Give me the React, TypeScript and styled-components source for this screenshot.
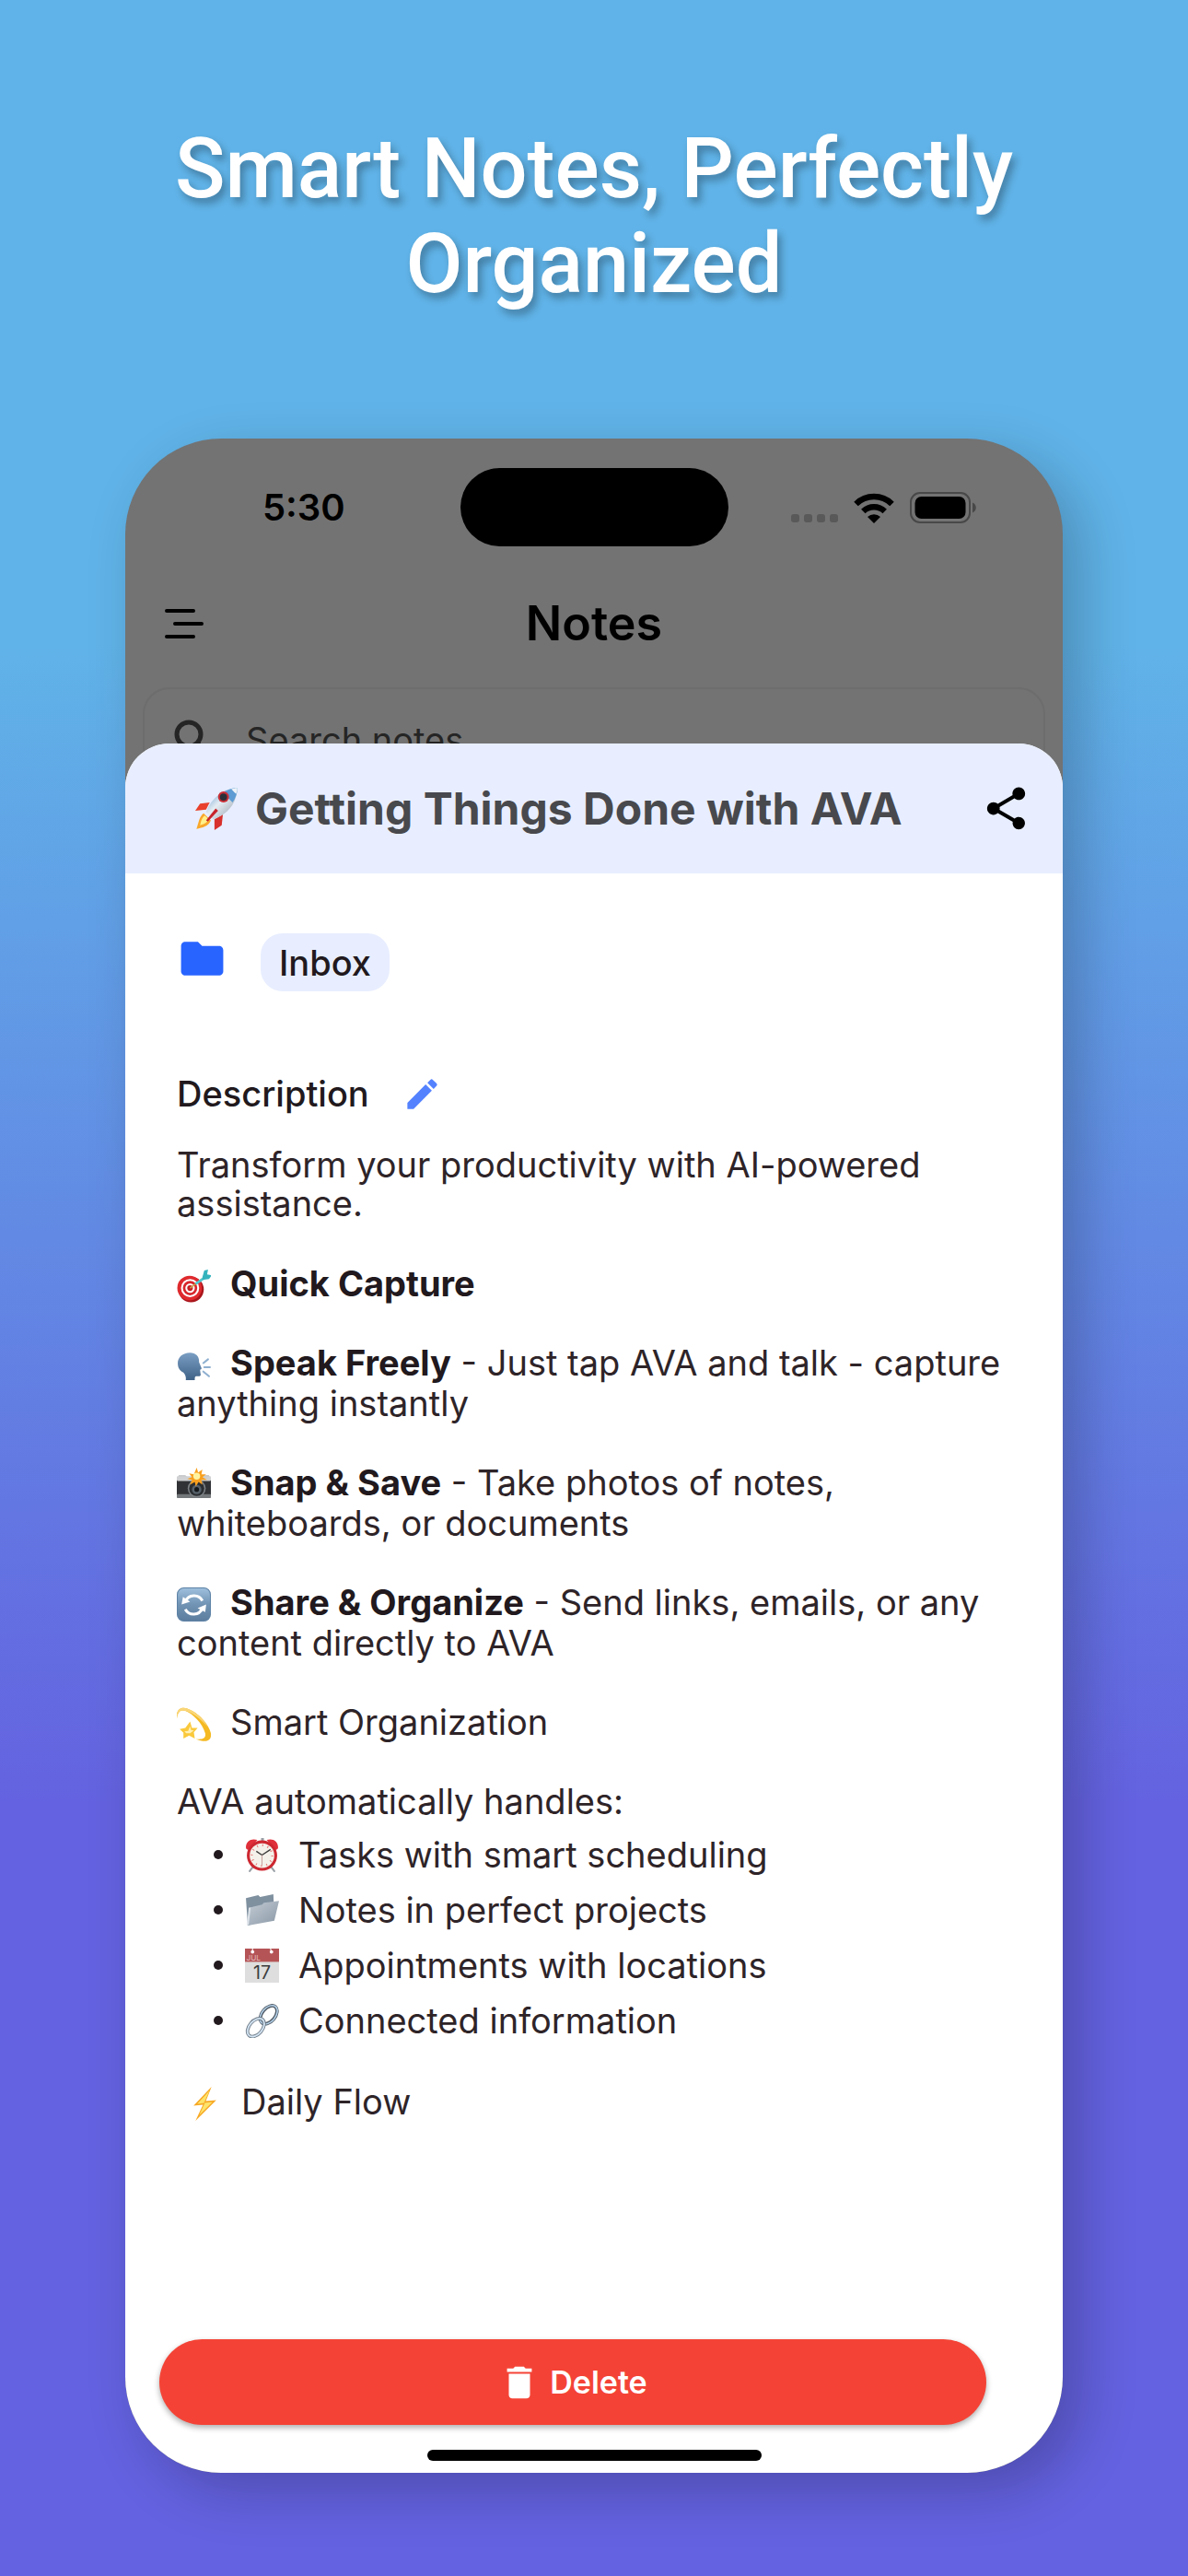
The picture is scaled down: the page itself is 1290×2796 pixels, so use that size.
import React from 'react';
import styled, { createGlobalStyle } from 'styled-components';
import { MdFolder, MdEdit, MdShare, MdDelete } from 'react-icons/md';

const GlobalStyle = createGlobalStyle`
  * { box-sizing: border-box; }
  body { margin: 0; }
  h1, h2, h3, p, ul { margin: 0; padding: 0; font-weight: 400; }
  button, input { font: inherit; color: inherit; border: 0; padding: 0; background: none; }
`;

const Page = styled.main`
  min-height: 100vh;
  display: flex;
  flex-direction: column;
  padding: 132px 136px 112px;
  background: linear-gradient(180deg, #60b3e8 25%, #6462e0 70%);
  font-family: Inter, 'Liberation Sans', sans-serif;
`;

const Headline = styled.h1`
  margin-bottom: 138px;
  font-family: Roboto, 'Liberation Sans', sans-serif;
  font-size: 90px;
  line-height: 103px;
  font-weight: 500;
  text-align: center;
  color: #fff;
  text-shadow: 4px 6px 8px rgba(0, 0, 0, 0.3);
`;

const Phone = styled.section`
  flex: 1;
  display: flex;
  flex-direction: column;
  border-radius: 104px;
  overflow: hidden;
  background: #737373;
  box-shadow: 20px 20px 60px rgba(0, 0, 0, 0.22);
`;

const StatusBar = styled.header`
  display: grid;
  grid-template-columns: 1fr 291px 1fr;
  align-items: center;
  padding-top: 32px;
  color: #000;
`;

const Clock = styled.time`
  justify-self: center;
  padding-left: 24px;
  font-size: 40px;
  line-height: 48px;
  font-weight: 600;
`;

const Island = styled.div`
  height: 85px;
  border-radius: 43px;
  background: #000;
`;

const StatusIcons = styled.div`
  justify-self: end;
  padding-right: 94px;
  display: flex;
  align-items: flex-end;
  gap: 17px;
`;

const NavBar = styled.div`
  display: grid;
  grid-template-columns: 1fr auto 1fr;
  align-items: center;
  height: 153px;
  padding: 14px 40px 0;
`;

const IconButton = styled.button`
  display: flex;
  cursor: pointer;
`;

const NavTitle = styled.h2`
  font-size: 52px;
  line-height: 60px;
  font-weight: 600;
  color: #000;
`;

const SearchBox = styled.label`
  display: flex;
  align-items: center;
  gap: 38px;
  height: 114px;
  margin: 0 19px;
  padding: 0 32px;
  border: 2px solid #6d6d6d;
  border-radius: 29px;
  color: #252525;
`;

const SearchInput = styled.input`
  flex: 1;
  min-width: 0;
  font-size: 38px;
  line-height: 44px;
  outline: none;
  &::placeholder { color: #252525; opacity: 1; }
`;

const Sheet = styled.article`
  position: relative;
  flex: 1;
  display: flex;
  flex-direction: column;
  margin-top: -53px;
  border-radius: 48px 48px 0 0;
  overflow: hidden;
  background: #fff;
`;

const SheetHeader = styled.header`
  display: flex;
  align-items: center;
  gap: 18px;
  height: 141px;
  padding: 0 34px 0 76px;
  background: #e8eeff;
  color: #000;
`;

const SheetTitle = styled.h2`
  flex: 1;
  font-size: 48px;
  line-height: 60px;
  font-weight: 700;
  color: #48494d;
`;

const SheetBody = styled.div`
  flex: 1;
  display: flex;
  flex-direction: column;
  padding: 65px 40px 0 56px;
  color: #2e2428;
`;

const ProjectRow = styled.div`
  display: flex;
  align-items: flex-start;
  gap: 36px;
  margin-bottom: 81px;
  color: #2864ff;
`;

const Chip = styled.button`
  height: 63px;
  padding: 0 20px;
  border-radius: 24px;
  background: #e8eeff;
  font-size: 38px;
  line-height: 44px;
  font-weight: 500;
  color: #21191d;
`;

const DescriptionHead = styled.div`
  display: flex;
  align-items: center;
  gap: 36px;
  margin-bottom: 26px;
  color: #5482ff;
`;

const Label = styled.h3`
  font-size: 38px;
  line-height: 60px;
  font-weight: 500;
  color: #21191d;
`;

const Note = styled.div`
  display: flex;
  flex-direction: column;
  gap: 42px;
  font-size: 38px;
  line-height: 44px;
`;

const Intro = styled.p`
  margin-bottom: 2px;
  line-height: 42px;
`;

const Indented = styled.p`
  padding-left: 12px;
`;

const Strong = styled.strong`
  font-weight: 700;
  color: #21191d;
`;

const EmojiSvg = styled.svg<{ $gap: number }>`
  display: inline-block;
  flex: none;
  vertical-align: -7px;
  margin-right: ${(p) => p.$gap}px;
`;

const Group = styled.div`
  display: flex;
  flex-direction: column;
  gap: 6px;
  margin-bottom: -6px;
`;

const List = styled.ul`
  list-style: none;
`;

const Item = styled.li`
  display: flex;
  align-items: center;
  height: 60px;
  padding-left: 40px;
  &::before {
    content: '';
    width: 10px;
    height: 10px;
    margin-right: 24px;
    border-radius: 50%;
    background: #21191d;
  }
`;

const Footer = styled.footer`
  display: flex;
  flex-direction: column;
  padding: 0 83px 27px 37px;
`;

const DeleteButton = styled.button`
  display: flex;
  align-items: center;
  justify-content: center;
  gap: 10px;
  height: 93px;
  border-radius: 47px;
  background: #f44336;
  box-shadow: 0 3px 6px rgba(0, 0, 0, 0.32);
  font-size: 34px;
  line-height: 40px;
  font-weight: 600;
  color: #fff;
  cursor: pointer;
`;

const HomeIndicator = styled.div`
  align-self: center;
  width: 363px;
  height: 12px;
  margin-bottom: 13px;
  border-radius: 6px;
  background: #000;
`;

type EmojiName =
  | 'rocket' | 'target' | 'speak' | 'camera' | 'refresh'
  | 'dizzy' | 'clock' | 'folder' | 'calendar' | 'link' | 'bolt';

const drawings: Record<EmojiName, React.ReactNode> = {
  rocket: (
    <>
      <defs>
        <linearGradient id="rk" x1="0" y1="0" x2="1" y2="1">
          <stop offset="0" stopColor="#4f8fc9" />
          <stop offset="0.45" stopColor="#e6edf3" />
          <stop offset="1" stopColor="#8c98a5" />
        </linearGradient>
      </defs>
      <path d="M12 13 4 14 0 20l9-1z" fill="#e8402c" />
      <path d="M23 23l-1 9-6 4 0-9z" fill="#d8302c" />
      <path d="M7 22c-4 3-4 8-6 13 5-1 10-2 12-7z" fill="#f9a72b" />
      <path d="M8 24c-3 2-3 5-4 8 3-1 6-2 7-5z" fill="#fff08a" />
      <path d="M35 1C25 1 14 8 9 21l6 6C27 23 35 13 35 1z" fill="url(#rk)" />
      <path d="M35 1c-4 0-8 1-12 4l8 8c3-4 4-8 4-12z" fill="#5c9bd3" />
      <path d="M35 1c-2 0-4 .5-5 1l4 4c.6-2 1-3 1-5z" fill="#eef3f8" />
      <circle cx="23.500" cy="8.500" r="4.600" fill="#c92f36" />
      <circle cx="23.500" cy="8.500" r="3" fill="#2c3039" />
      <path d="M17 18 9 28l1.500 1L19 20z" fill="#c7242c" />
    </>
  ),
  target: (
    <>
      <circle cx="15" cy="22" r="13.500" fill="#a8161c" />
      <circle cx="13.500" cy="20.500" r="13" fill="#df2a2e" />
      <circle cx="14" cy="20.500" r="9.600" fill="#fff" />
      <circle cx="14" cy="20.500" r="7.600" fill="#d7262b" />
      <circle cx="14" cy="20.500" r="5" fill="#fff" />
      <circle cx="14" cy="20.500" r="3" fill="#c51e24" />
      <path d="M14 20.500 27 10.500" stroke="#c9a24c" strokeWidth="1.600" />
      <path d="M19 15l9-6 1.500 2-8.500 6z" fill="#4ccad2" />
      <path d="M27 9 29 2l4-1-1 5 5 1-3 4-7 1z" fill="#35b3bd" />
    </>
  ),
  speak: (
    <>
      <defs>
        <linearGradient id="sp" x1="0" y1="0" x2="0" y2="1">
          <stop offset="0" stopColor="#7b9fc4" />
          <stop offset="1" stopColor="#3f6287" />
        </linearGradient>
      </defs>
      <path d="M14 5C6 5 1 10 1 16c0 5 2 8 6 10 2 2 3 5 2.500 8H19c0-3 0-4 2-4 3 0 5 0 4-3l-.5-4c2-.5 2-1 1-3l-2-5C24 9 20 5 14 5z" fill="url(#sp)" />
      <path d="M28 16l5-4M29 20.500h6M28 25l6 5" stroke="#8fb0d0" strokeWidth="2" strokeLinecap="round" />
    </>
  ),
  camera: (
    <>
      <path d="M2 8h7l2 2h14l2-2h7l1 3H1z" fill="#b9bcbf" />
      <rect x="0" y="10" width="36" height="22" rx="1.500" fill="#303235" />
      <rect x="0" y="9" width="36" height="5" rx="1" fill="#cfd1d3" />
      <rect x="0" y="28" width="36" height="4" rx="1" fill="#74777a" />
      <circle cx="21" cy="22" r="9.500" fill="#7d8286" />
      <circle cx="21" cy="22" r="8" fill="#2b2e31" />
      <circle cx="21" cy="23" r="5" fill="#556069" />
      <circle cx="21" cy="23" r="2.500" fill="#14171a" />
      <path d="M21 0l1.500 5L27 2l-1 5 5 0-4 3 5 3-6 0 1 5-4-3-3 5-1-5-5 3 2-5-5-1 5-2-3-4 5 1z" fill="#f9a01f" />
      <circle cx="21" cy="9" r="3.600" fill="#fff3a0" />
    </>
  ),
  refresh: (
    <>
      <defs>
        <linearGradient id="rf" x1="0" y1="0" x2="0" y2="1">
          <stop offset="0" stopColor="#9fc0dd" />
          <stop offset="0.5" stopColor="#7193b4" />
          <stop offset="1" stopColor="#5c7d9d" />
        </linearGradient>
      </defs>
      <rect x="0.500" y="0.500" width="35" height="35" rx="7" fill="url(#rf)" stroke="#5d82a6" />
      <path d="M9 15a10 10 0 0 1 18-1" fill="none" stroke="#fff" strokeWidth="3" />
      <path d="M27 22a10 10 0 0 1-18 1" fill="none" stroke="#fff" strokeWidth="3" />
      <path d="M5 18l1.500-8L14 15z" fill="#fff" />
      <path d="M31 18l-1 8-8-4z" fill="#fff" />
    </>
  ),
  dizzy: (
    <>
      <path d="M0 12C-1 3 4-1 11 1.500c12 4 23 17 25 26 1 9-6 10-16 6 8 1 11-1 10-6C27 17 17 7 9 4 4 2 1 5 0 12z" fill="#f5b921" />
      <path d="M0 12C-1 3 4-1 11 1.500c9 3 18 12 22 20C27 14 17 6 9 4 4 2 1 5 0 12z" fill="#f9d678" />
      <path d="M14 15l2 7 6 0-4 4.500 1 6.500-6-3-6 3 0-6-4-4 6-1z" fill="#fac93c" />
      <path d="M14 20l1 4 3 .5-4 3-4 0-2-2 4-.5z" fill="#fff0b4" />
    </>
  ),
  clock: (
    <>
      <path d="M1 10C1 3 7 0 13 2L5 12c-2 1-4 0-4-2zM35 10c0-7-6-10-12-8l8 10c2 1 4 0 4-2z" fill="#e0303a" />
      <path d="M17 0h3v5h-3z" fill="#9aa0a6" />
      <path d="M8 31l-3 4M28 31l3 4" stroke="#9aa0a6" strokeWidth="2" strokeLinecap="round" />
      <circle cx="18" cy="18.500" r="16" fill="#cd2831" />
      <circle cx="18" cy="18.500" r="13" fill="#f4f1ea" />
      <circle cx="18" cy="18.500" r="10.800" fill="none" stroke="#e86a6c" strokeWidth="2.200" strokeDasharray="0.900 4.755" />
      <path d="M12 14l6 4 9-6" fill="none" stroke="#3b3b3b" strokeWidth="1.300" />
      <path d="M18 18v11" stroke="#c9a0a0" />
    </>
  ),
  folder: (
    <>
      <defs>
        <linearGradient id="fd" x1="0" y1="0" x2="1" y2="1">
          <stop offset="0" stopColor="#c2ccd6" />
          <stop offset="1" stopColor="#8b98a5" />
        </linearGradient>
      </defs>
      <path d="M1 5l13-3 2 2 14-3 1 24L3 34z" fill="#7f909f" />
      <path d="M3 34 5 15l13-3 2-2 16-2-5 21z" fill="url(#fd)" />
      <path d="M2 34 4 15l2 0L4 33z" fill="#dde3e9" />
    </>
  ),
  calendar: (
    <>
      <rect x="0" y="0" width="36" height="36" fill="#dedede" />
      <rect x="0" y="0" width="36" height="14" fill="#b55456" />
      <circle cx="8" cy="3.500" r="1.800" fill="#fff" />
      <circle cx="28" cy="3.500" r="1.800" fill="#fff" />
      <path d="M8 0v4M27 0l1 4" stroke="#fff" />
      <text x="1.500" y="12.500" fontSize="8" fill="#e3b9b9" fontFamily="Inter, sans-serif">JUL</text>
      <text x="18" y="32" fontSize="19" textAnchor="middle" fill="#3d3d3d" fontFamily="Inter, sans-serif">17</text>
    </>
  ),
  link: (
    <>
      <ellipse cx="25" cy="11.500" rx="7" ry="11" transform="rotate(40 25 11.500)" fill="none" stroke="#4f5a65" strokeWidth="3.600" />
      <ellipse cx="25" cy="11.500" rx="7.300" ry="11.300" transform="rotate(40 25 11.500)" fill="none" stroke="#b5d2ea" strokeWidth="1.500" />
      <ellipse cx="11.500" cy="25" rx="7" ry="11" transform="rotate(40 11.500 25)" fill="none" stroke="#6f7c89" strokeWidth="3.600" />
      <ellipse cx="11.500" cy="25" rx="7" ry="11" transform="rotate(40 11.500 25)" fill="none" stroke="#d3e3f1" strokeWidth="1.800" />
    </>
  ),
  bolt: (
    <>
      <path d="M25 0 6 20l10-1L8 36l22-22-11 1z" fill="#f7a823" />
      <path d="M23 4 10 18l8-1-6 13 14-14-9 1z" fill="#fde36a" />
    </>
  ),
};

function Emoji({ name, label, size = 37, gap = 21 }: { name: EmojiName; label: string; size?: number; gap?: number }) {
  return (
    <EmojiSvg $gap={gap} width={size} height={size} viewBox="0 0 36 36" role="img" aria-label={label}>
      {drawings[name]}
    </EmojiSvg>
  );
}

const handled: { icon: EmojiName; label: string; text: string }[] = [
  { icon: 'clock', label: 'Alarm clock', text: 'Tasks with smart scheduling' },
  { icon: 'folder', label: 'Folder', text: 'Notes in perfect projects' },
  { icon: 'calendar', label: 'Calendar', text: 'Appointments with locations' },
  { icon: 'link', label: 'Link', text: 'Connected information' },
];

const features: { icon: EmojiName; label: string; name: string; text: string }[] = [
  { icon: 'speak', label: 'Speaking head', name: 'Speak Freely', text: 'Just tap AVA and talk - capture anything instantly' },
  { icon: 'camera', label: 'Camera', name: 'Snap & Save', text: 'Take photos of notes, whiteboards, or documents' },
  { icon: 'refresh', label: 'Refresh', name: 'Share & Organize', text: 'Send links, emails, or any content directly to AVA' },
];

export default function App() {
  return (
    <Page>
      <GlobalStyle />
      <Headline>Smart Notes, Perfectly Organized</Headline>
      <Phone>
        <StatusBar>
          <Clock>5:30</Clock>
          <Island />
          <StatusIcons>
            <svg width="51" height="10" viewBox="0 0 51 10" fill="#595959" aria-hidden="true">
              <rect x="0" y="0" width="9" height="9" rx="3" />
              <rect x="14" y="0" width="9" height="9" rx="3" />
              <rect x="28" y="0" width="9" height="9" rx="3" />
              <rect x="42" y="0" width="9" height="9" rx="3" />
            </svg>
            <svg width="44" height="33" viewBox="0 0 44 33" aria-hidden="true">
              <path d="M2.500 12a28 28 0 0 1 39 0" fill="none" stroke="#000" strokeWidth="6.500" />
              <path d="M10.300 20a17 17 0 0 1 23.400 0" fill="none" stroke="#000" strokeWidth="6.500" />
              <path d="M15 26a10.500 10.500 0 0 1 14 0l-7 7z" />
            </svg>
            <svg width="72" height="34" viewBox="0 0 72 34" aria-hidden="true">
              <rect x="1" y="1" width="64" height="32" rx="10" fill="none" stroke="#484848" strokeWidth="2" />
              <rect x="5.500" y="5" width="55" height="24" rx="7" />
              <path d="M68 11.500c5 2 5 9 0 11z" fill="#484848" />
            </svg>
          </StatusIcons>
        </StatusBar>
        <NavBar>
          <IconButton aria-label="Menu">
            <svg width="48" height="36" viewBox="0 0 48 36" stroke="#000" strokeWidth="4" strokeLinecap="round">
              <path d="M5 4h29M14 18h29M5 32h29" />
            </svg>
          </IconButton>
          <NavTitle>Notes</NavTitle>
        </NavBar>
        <SearchBox>
          <svg width="40" height="44" viewBox="0 0 40 44" fill="none" stroke="#252525" strokeWidth="5" aria-hidden="true">
            <circle cx="16" cy="16" r="13" />
            <path d="M25 25l12 14" />
          </svg>
          <SearchInput aria-label="Search notes" placeholder="Search notes" />
        </SearchBox>
        <Sheet>
          <SheetHeader>
            <Emoji name="rocket" label="Rocket" size={47} gap={0} />
            <SheetTitle>Getting Things Done with AVA</SheetTitle>
            <IconButton aria-label="Share"><MdShare size={55} /></IconButton>
          </SheetHeader>
          <SheetBody>
            <ProjectRow>
              <MdFolder size={55} />
              <Chip>Inbox</Chip>
            </ProjectRow>
            <DescriptionHead>
              <Label>Description</Label>
              <IconButton aria-label="Edit description"><MdEdit size={43} /></IconButton>
            </DescriptionHead>
            <Note>
              <Intro>Transform your productivity with AI-powered assistance.</Intro>
              <p>
                <Emoji name="target" label="Target" />
                <Strong>Quick Capture</Strong>
              </p>
              {features.map((f) => (
                <p key={f.name}>
                  <Emoji name={f.icon} label={f.label} />
                  <Strong>{f.name}</Strong> - {f.text}
                </p>
              ))}
              <p>
                <Emoji name="dizzy" label="Dizzy star" />
                Smart Organization
              </p>
              <Group>
                <p>AVA automatically handles:</p>
                <List>
                  {handled.map((h) => (
                    <Item key={h.text}>
                      <Emoji name={h.icon} label={h.label} />
                      {h.text}
                    </Item>
                  ))}
                </List>
              </Group>
              <Indented>
                <Emoji name="bolt" label="Lightning" />
                Daily Flow
              </Indented>
            </Note>
          </SheetBody>
          <Footer>
            <DeleteButton>
              <MdDelete size={46} />
              Delete
            </DeleteButton>
          </Footer>
          <HomeIndicator />
        </Sheet>
      </Phone>
    </Page>
  );
}
